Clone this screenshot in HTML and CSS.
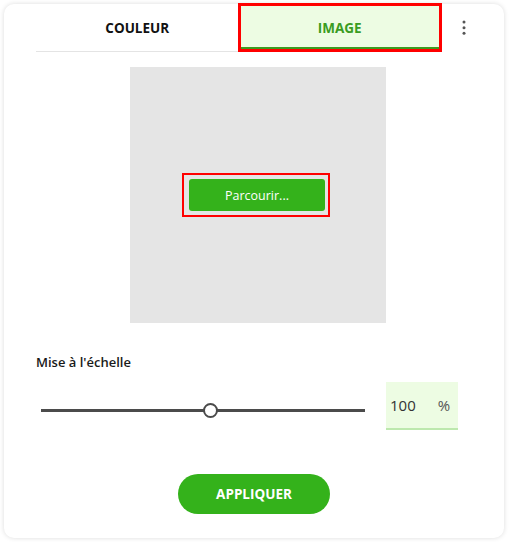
FILE: index.html
```html
<!DOCTYPE html>
<html lang="fr">
<head>
<meta charset="utf-8">
<title>Image</title>
<link rel="stylesheet" href="styles.css">
</head>
<body>
<div class="card">
  <div class="header">
    <div class="tabs">
      <div class="tab">COULEUR</div>
      <div class="tab active">IMAGE</div>
    </div>
    <div class="kebab">
      <svg width="4" height="16" viewBox="0 0 4 16"><circle cx="2" cy="2" r="1.5" fill="#555"/><circle cx="2" cy="7.7" r="1.5" fill="#555"/><circle cx="2" cy="13.2" r="1.5" fill="#555"/></svg>
    </div>
  </div>
  <div class="drop-row">
    <div class="drop">
      <div class="browse-wrap"><button class="browse">Parcourir...</button></div>
    </div>
  </div>
  <div class="label">Mise à l'échelle</div>
  <div class="scale-row">
    <div class="track"><div class="thumb"></div></div>
    <div class="scale-input"><span class="val">100</span><span class="pct">%</span></div>
  </div>
  <div class="actions"><button class="apply">APPLIQUER</button></div>
</div>
</body>
</html>
```

FILE: styles.css
```css
html, body {
  margin: 0;
  padding: 0;
  background: #ffffff;
}
body {
  width: 510px;
  height: 542px;
  overflow: hidden;
  font-family: "Open Sans", "Noto Sans", sans-serif;
}
.card {
  margin: 4px 0 0 4px;
  width: 500px;
  height: 534px;
  box-sizing: border-box;
  background: #fff;
  border-radius: 10px;
  box-shadow: 0 0 5px rgba(0, 0, 0, 0.14);
  padding: 0 16px 0 32px;
  display: flex;
  flex-direction: column;
}
.header {
  display: flex;
  align-items: flex-start;
  height: 48px;
}
.tabs {
  display: flex;
  width: 405px;
  border-bottom: 1px solid #e4e4e4;
}
.tab {
  flex: 1;
  height: 47px;
  display: flex;
  align-items: center;
  justify-content: center;
  font-size: 13.5px;
  font-weight: 700;
  color: #111;
}
.tab.active {
  background: #edfce3;
  color: #3a9c22;
  box-shadow: inset 0 -4px 0 #3d9b1f;
  outline: 3px solid #ff0000;
  outline-offset: -2px;
}
.kebab {
  width: 46px;
  height: 48px;
  display: flex;
  align-items: center;
  justify-content: center;
}
.kebab svg { display: block; }
.drop-row {
  display: flex;
  justify-content: center;
  padding-right: 8px;
  margin-top: 15px;
}
.drop {
  width: 256px;
  height: 256px;
  background: #e5e5e5;
  display: flex;
  align-items: center;
  justify-content: center;
}
.browse-wrap {
  border: 2px solid #ff0000;
  padding: 4px 3px 4px 5px;
  margin-right: 4px;
}
.browse {
  display: block;
  width: 136px;
  height: 32px;
  border: 0;
  border-radius: 3px;
  background: #34b21b;
  color: #fff;
  font-family: "Open Sans", "Noto Sans", sans-serif;
  font-size: 12.5px;
  padding: 0;
}
.label {
  margin-top: 30px;
  font-size: 13px;
  line-height: 18px;
  font-weight: 600;
  color: #1a1a1a;
}
.scale-row {
  margin-top: 11px;
  display: flex;
  align-items: flex-start;
  height: 48px;
}
.track {
  position: relative;
  margin-left: 5px;
  margin-top: 27px;
  width: 324px;
  height: 3px;
  background: #4b4b4b;
}
.thumb {
  position: absolute;
  left: 162px;
  top: -6px;
  width: 11px;
  height: 11px;
  border: 2px solid #4b4b4b;
  border-radius: 50%;
  background: #fff;
}
.scale-input {
  margin-left: 21px;
  width: 72px;
  height: 48px;
  box-sizing: border-box;
  background: #edfce3;
  border-bottom: 2px solid #bde8ae;
  display: flex;
  align-items: center;
  font-size: 15px;
  color: #333;
}
.val { margin-left: 4px; }
.pct { margin-left: 22px; color: #555; }
.actions {
  margin-top: 44px;
  display: flex;
  justify-content: center;
  padding-right: 16px;
}
.apply {
  width: 152px;
  height: 40px;
  border: 0;
  border-radius: 20px;
  background: #34b21b;
  color: #fff;
  font-family: "Open Sans", "Noto Sans", sans-serif;
  font-size: 13.5px;
  font-weight: 700;
  padding: 0;
}
```
